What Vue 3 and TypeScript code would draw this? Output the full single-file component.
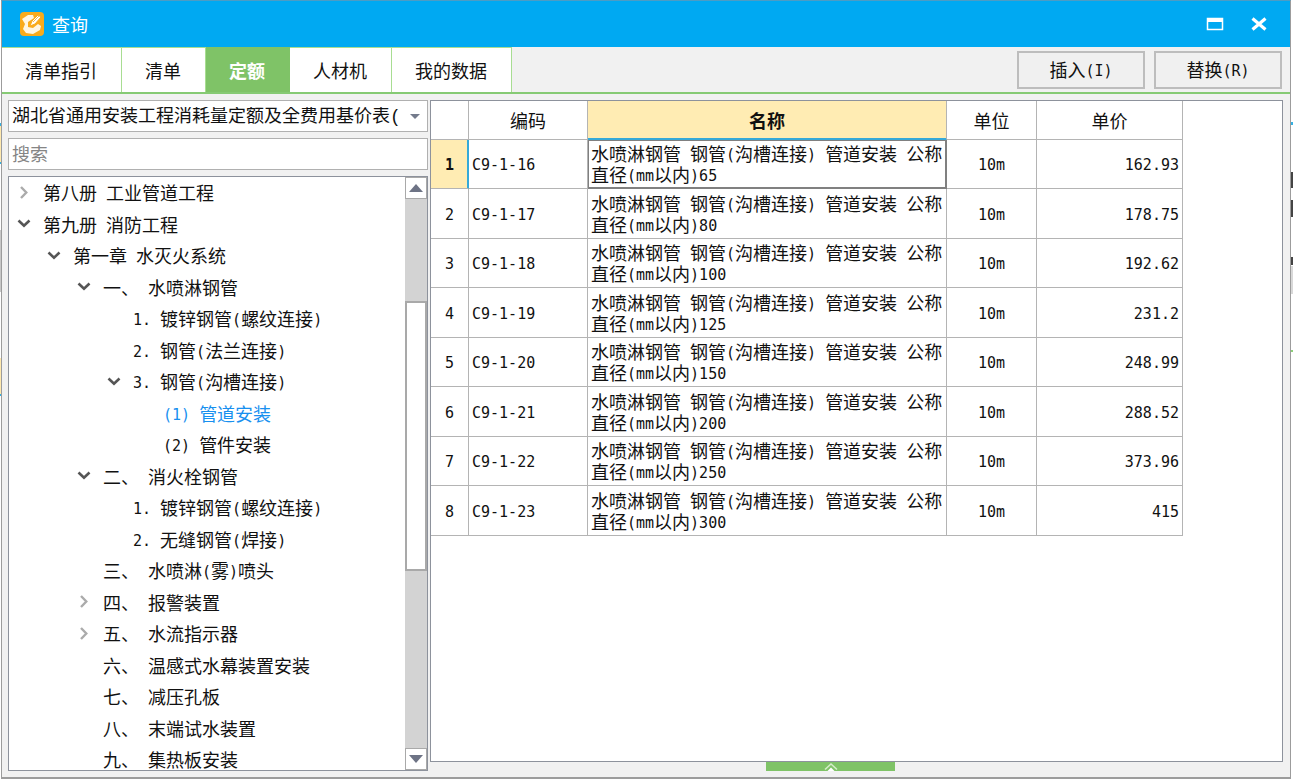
<script setup lang="ts">
import { computed, h, ref } from 'vue'
import type { FunctionalComponent } from 'vue'

interface TreeNode {
  id: number
  level: number
  text: string
  state?: 'open' | 'closed'
}

interface QuotaRow {
  code: string
  size: number
  unit: string
  price: string
}

// Half-width characters are set at half the advance of the Chinese glyphs.
const MixedText: FunctionalComponent<{ text: string }> = (props) =>
  (props.text.match(/[\x20-\x7e]+|[^\x20-\x7e]+/g) ?? []).map((run) =>
    /^[\x20-\x7e]/.test(run) ? h('span', { class: 'half' }, run) : run,
  )
MixedText.props = ['text']

const tabs = ['清单指引', '清单', '定额', '人材机', '我的数据']
const activeTab = ref('定额')

const books = ['湖北省通用安装工程消耗量定额及全费用基价表(']
const book = ref(books[0])
const keyword = ref('')

const nodes: TreeNode[] = [
  { id: 1, level: 0, text: '第八册 工业管道工程', state: 'closed' },
  { id: 2, level: 0, text: '第九册 消防工程', state: 'open' },
  { id: 3, level: 1, text: '第一章 水灭火系统', state: 'open' },
  { id: 4, level: 2, text: '一、 水喷淋钢管', state: 'open' },
  { id: 5, level: 3, text: '1. 镀锌钢管(螺纹连接)' },
  { id: 6, level: 3, text: '2. 钢管(法兰连接)' },
  { id: 7, level: 3, text: '3. 钢管(沟槽连接)', state: 'open' },
  { id: 8, level: 4, text: '(1) 管道安装' },
  { id: 9, level: 4, text: '(2) 管件安装' },
  { id: 10, level: 2, text: '二、 消火栓钢管', state: 'open' },
  { id: 11, level: 3, text: '1. 镀锌钢管(螺纹连接)' },
  { id: 12, level: 3, text: '2. 无缝钢管(焊接)' },
  { id: 13, level: 2, text: '三、 水喷淋(雾)喷头' },
  { id: 14, level: 2, text: '四、 报警装置', state: 'closed' },
  { id: 15, level: 2, text: '五、 水流指示器', state: 'closed' },
  { id: 16, level: 2, text: '六、 温感式水幕装置安装' },
  { id: 17, level: 2, text: '七、 减压孔板' },
  { id: 18, level: 2, text: '八、 末端试水装置' },
  { id: 19, level: 2, text: '九、 集热板安装' },
]
const selectedNode = ref(8)

const rows: QuotaRow[] = [
  { code: 'C9-1-16', size: 65, unit: '10m', price: '162.93' },
  { code: 'C9-1-17', size: 80, unit: '10m', price: '178.75' },
  { code: 'C9-1-18', size: 100, unit: '10m', price: '192.62' },
  { code: 'C9-1-19', size: 125, unit: '10m', price: '231.2' },
  { code: 'C9-1-20', size: 150, unit: '10m', price: '248.99' },
  { code: 'C9-1-21', size: 200, unit: '10m', price: '288.52' },
  { code: 'C9-1-22', size: 250, unit: '10m', price: '373.96' },
  { code: 'C9-1-23', size: 300, unit: '10m', price: '415' },
]
const selectedRow = ref(0)
const names = computed(() =>
  rows.map((r) => `水喷淋钢管 钢管(沟槽连接) 管道安装 公称直径(mm以内)${r.size}`),
)
</script>

<template>
  <div class="desktop">
    <main class="window">
      <header class="titlebar">
        <svg class="logo" viewBox="0 0 24 24" aria-hidden="true">
          <rect width="24" height="24" rx="4" fill="#f9ab1c" />
          <path d="M2 7 L8 3 L13 3 L14 6 L8 10 L8 15 L13 16 L18 12 L21 14 L20 18 L13 22 L6 21 L3 17 L5 12 Z" fill="#fff6e2" />
          <path d="M10 14 L12 9 L18 3 L21 5 L15 12 Z" fill="#fff" stroke="#f9ab1c" stroke-width="1" />
          <path d="M13 10 L19 4" stroke="#f7b94a" stroke-width="1" />
        </svg>
        <h1>查询</h1>
        <button class="sys" type="button" aria-label="最大化">
          <svg width="18" height="14" viewBox="0 0 18 14"><path d="M1.500 1.500h15v11h-15z" fill="none" stroke="#fff" stroke-width="1.500" /><path d="M1 1h16v4H1z" fill="#fff" /></svg>
        </button>
        <button class="sys" type="button" aria-label="关闭">
          <svg width="18" height="14" viewBox="0 0 18 14"><path d="M2.500 1.500 15.500 12.500M15.500 1.500 2.500 12.500" stroke="#fff" stroke-width="3.200" /></svg>
        </button>
      </header>

      <div class="toolbar">
        <nav class="tabs" role="tablist">
          <button
            v-for="tab in tabs"
            :key="tab"
            type="button"
            role="tab"
            :aria-selected="tab === activeTab"
            :class="['tab', { active: tab === activeTab }]"
            @click="activeTab = tab"
          >{{ tab }}</button>
        </nav>
        <div class="actions">
          <button type="button" class="action"><MixedText text="插入(I)" /></button>
          <button type="button" class="action"><MixedText text="替换(R)" /></button>
        </div>
      </div>

      <div class="body">
        <section class="side">
          <div class="combo">
            <select v-model="book" aria-label="定额库">
              <option v-for="b in books" :key="b" :value="b">{{ b }}</option>
            </select>
            <svg class="caret" width="10" height="5" viewBox="0 0 10 5" aria-hidden="true"><path d="M0 0h10L5 5z" fill="#747b8c" /></svg>
          </div>
          <input v-model="keyword" class="search" type="text" placeholder="搜索" aria-label="搜索" />
          <div class="treebox">
            <ul class="tree" role="tree">
              <li
                v-for="n in nodes"
                :key="n.id"
                role="treeitem"
                :aria-selected="n.id === selectedNode"
                :class="['node', 'level' + n.level, { selected: n.id === selectedNode }]"
                @click="selectedNode = n.id"
              >
                <span class="twist">
                  <svg v-if="n.state === 'open'" width="14" height="10" viewBox="0 0 14 10"><path d="M1.500 1.500 7 6.800 12.500 1.500" fill="none" stroke="#555" stroke-width="2.600" /></svg>
                  <svg v-else-if="n.state === 'closed'" width="10" height="14" viewBox="0 0 10 14"><path d="M2 1 7.300 6.500 2 12" fill="none" stroke="#ababab" stroke-width="2.400" /></svg>
                </span>
                <span class="label"><MixedText :text="n.text" /></span>
              </li>
            </ul>
            <div class="scrollbar">
              <button type="button" aria-label="向上滚动">
                <svg width="14" height="8" viewBox="0 0 14 8"><path d="M0 8h14L7 0z" fill="#6d7385" /></svg>
              </button>
              <div class="before"></div>
              <div class="thumb"></div>
              <div class="after"></div>
              <button type="button" aria-label="向下滚动">
                <svg width="14" height="8" viewBox="0 0 14 8"><path d="M0 0h14L7 8z" fill="#6d7385" /></svg>
              </button>
            </div>
          </div>
        </section>

        <section class="content">
          <div class="gridbox">
            <table>
              <colgroup>
                <col class="c-no" /><col class="c-code" /><col class="c-name" /><col class="c-unit" /><col class="c-price" />
              </colgroup>
              <thead>
                <tr>
                  <th scope="col" aria-label="序号"></th>
                  <th scope="col">编码</th>
                  <th scope="col" class="current">名称</th>
                  <th scope="col">单位</th>
                  <th scope="col">单价</th>
                </tr>
              </thead>
              <tbody>
                <tr v-for="(r, i) in rows" :key="r.code" :class="{ picked: i === selectedRow }" @click="selectedRow = i">
                  <th scope="row" class="no">{{ i + 1 }}</th>
                  <td class="code">{{ r.code }}</td>
                  <td class="name"><MixedText :text="names[i]" /></td>
                  <td class="unit">{{ r.unit }}</td>
                  <td class="price">{{ r.price }}</td>
                </tr>
              </tbody>
            </table>
          </div>
          <button class="expand" type="button" aria-label="展开">
            <svg width="16" height="9" viewBox="0 0 16 9"><path d="M2 7.500 8 2 14 7.500" fill="none" stroke="#d5edc9" stroke-width="1.600" /><path d="M4.500 9 8 5.500 11.500 9z" fill="#fff" /></svg>
          </button>
        </section>
      </div>
    </main>
  </div>
</template>

<style>
body {
  margin: 0;
  background: #fff;
}
.half {
  font-family: "DejaVu Sans Mono", monospace;
  font-size: 15px;
  line-height: 1px;
  vertical-align: 1px;
  white-space: pre-wrap;
}
</style>

<style scoped>
.desktop {
  box-sizing: border-box;
  height: 100vh;
  padding: 0 2px 4px 1px;
  overflow: hidden;
  font: 18px/21px "Noto Sans CJK SC", sans-serif;
  color: #111;
  background:
    linear-gradient(#35b0e2, #35b0e2) 0 123px / 2px 3px no-repeat,
    linear-gradient(#35b0e2, #35b0e2) 0 162px / 2px 2px no-repeat,
    linear-gradient(#ffe9ae, #ffe9ae) 0 126px / 2px 36px no-repeat,
    linear-gradient(#ffe9ae, #ffe9ae) 0 358px / 2px 36px no-repeat,
    linear-gradient(#35b0e2, #35b0e2) 0 394px / 2px 2px no-repeat,
    linear-gradient(#c8c8c8, #c8c8c8) 0 230px / 2px 62px no-repeat,
    linear-gradient(#35b0e2, #35b0e2) 100% 122px / 2px 3px no-repeat,
    linear-gradient(#444, #444) 100% 172px / 2px 16px no-repeat,
    linear-gradient(#444, #444) 100% 200px / 2px 17px no-repeat,
    linear-gradient(#444, #444) 100% 257px / 2px 8px no-repeat,
    linear-gradient(#d8d8d8, #d8d8d8) 100% 266px / 2px 28px no-repeat,
    linear-gradient(#8ccf78, #8ccf78) 100% 350px / 2px 2px no-repeat,
    #fff;
}
.window {
  box-sizing: border-box;
  height: 100%;
  display: flex;
  flex-direction: column;
  border: 1px solid #9c9c9c;
  border-top-color: #4d9cc4;
  border-bottom-width: 2px;
  background: #f1f1f1;
}
button,
input,
select {
  font: inherit;
  color: inherit;
  margin: 0;
}
.titlebar {
  flex: none;
  display: flex;
  align-items: center;
  height: 46px;
  padding: 0 12px 0 18px;
  background: #00a9f2;
  color: #fff;
}
.logo {
  width: 24px;
  height: 24px;
}
h1 {
  flex: 1;
  margin: 0 0 0 8px;
  font-size: 18px;
  font-weight: 400;
}
.sys {
  display: flex;
  align-items: center;
  justify-content: center;
  width: 38px;
  height: 30px;
  margin-left: 6px;
  padding: 0;
  border: 0;
  background: none;
}
.toolbar {
  flex: none;
  display: flex;
  justify-content: space-between;
  height: 45px;
  border-bottom: 2px solid #86ca74;
}
.tabs {
  display: flex;
  background: #fff;
}
.tab {
  padding: 0 24px 0 23px;
  border: 0;
  border-right: 1px solid #a8dd92;
  border-top: 1px solid #a8dd92;
  background: #fff;
}
.tab.active {
  background: #7fc367;
  border-color: #7fc367;
  color: #fff;
  font-weight: 700;
}
.actions {
  display: flex;
  align-items: center;
  gap: 9px;
  padding-right: 8px;
}
.action {
  width: 128px;
  height: 38px;
  padding: 0;
  border: 2px solid #bdbdbd;
  background: #f0f0f0;
}
.body {
  flex: 1;
  min-height: 0;
  display: flex;
  gap: 2px;
  padding: 6px 7px 6px 6px;
}
.side {
  width: 420px;
  flex: none;
  display: flex;
  flex-direction: column;
  gap: 6px;
}
.combo {
  display: flex;
  align-items: center;
  height: 32px;
  box-sizing: border-box;
  border: 1px solid #b0b0b0;
  background: #fff;
}
select {
  flex: 1;
  min-width: 0;
  height: 100%;
  padding: 3px 0 0 3px;
  border: 0;
  appearance: none;
  background: #fff;
  font-family: "Liberation Mono", "Noto Sans CJK SC", monospace;
}
.caret {
  margin: 0 7px 0 6px;
}
.search {
  box-sizing: border-box;
  height: 32px;
  padding: 0 3px 2px;
  border: 1px solid #b0b0b0;
  background: #fff;
}
.search::placeholder {
  color: #858585;
  opacity: 1;
}
.treebox {
  flex: 1;
  min-height: 0;
  display: flex;
  border: 1px solid #8d929c;
  background: #fff;
}
.tree {
  flex: 1;
  margin: 0;
  padding: 0;
  list-style: none;
  overflow: hidden;
}
.node {
  display: flex;
  align-items: center;
  gap: 5px;
  height: 31px;
  padding-left: 1px;
  white-space: nowrap;
}
.node:nth-child(even) {
  height: 32px;
}
.node.level1 { padding-left: 31px; }
.node.level2 { padding-left: 61px; }
.node.level3 { padding-left: 91px; }
.node.level4 { padding-left: 121px; }
.selected {
  color: #1890ef;
}
.twist {
  flex: none;
  display: flex;
  justify-content: center;
  width: 28px;
}
.scrollbar {
  width: 22px;
  display: flex;
  flex-direction: column;
  background: #d3d3d3;
}
.scrollbar button {
  flex: none;
  display: flex;
  align-items: center;
  justify-content: center;
  height: 22px;
  padding: 0;
  border: 1px solid #a9a9a9;
  background: #fff;
}
.before { flex: 103; }
.thumb {
  flex: 270;
  border: 2px solid #a9a9a9;
  background: #fff;
}
.after { flex: 179; }
.content {
  flex: 1;
  min-width: 0;
  display: flex;
  flex-direction: column;
  align-items: center;
}
.gridbox {
  flex: 1;
  align-self: stretch;
  border: 1px solid #8d929c;
  background: #fff;
}
table {
  width: 752px;
  table-layout: fixed;
  border-collapse: separate;
  border-spacing: 0;
}
.c-no { width: 38px; }
.c-code { width: 119px; }
.c-name { width: 359px; }
.c-unit { width: 90px; }
.c-price { width: 146px; }
th,
td {
  box-sizing: border-box;
  height: 49px;
  padding: 0 3px;
  border-right: 1px solid #b4b4b4;
  border-bottom: 1px solid #b4b4b4;
  font-weight: 400;
}
thead th {
  height: 39px;
}
tbody tr:nth-child(even) > * {
  height: 50px;
}
.current {
  background: #ffecb3;
  font-weight: 700;
  border-bottom-color: #35a9d8;
  box-shadow: inset 0 -1px #35a9d8;
}
.no,
.code,
.unit,
.price {
  padding-top: 3px;
  font-family: "DejaVu Sans Mono", monospace;
  font-size: 15px;
}
.name {
  padding: 0 2px 0 3px;
}
.unit { text-align: center; }
.price { text-align: right; }
.picked .no {
  background: #ffecb3;
  font-weight: 700;
  border-right-color: #35a9d8;
  box-shadow: inset -1px 0 #35a9d8;
}
.picked .name {
  border-color: #808080;
  box-shadow: inset 1px 1px #808080, inset -1px -1px #808080;
}
.expand {
  flex: none;
  display: flex;
  justify-content: center;
  width: 129px;
  height: 9px;
  margin-right: 52px;
  padding: 0;
  border: 0;
  background: #7fc367;
}
</style>
